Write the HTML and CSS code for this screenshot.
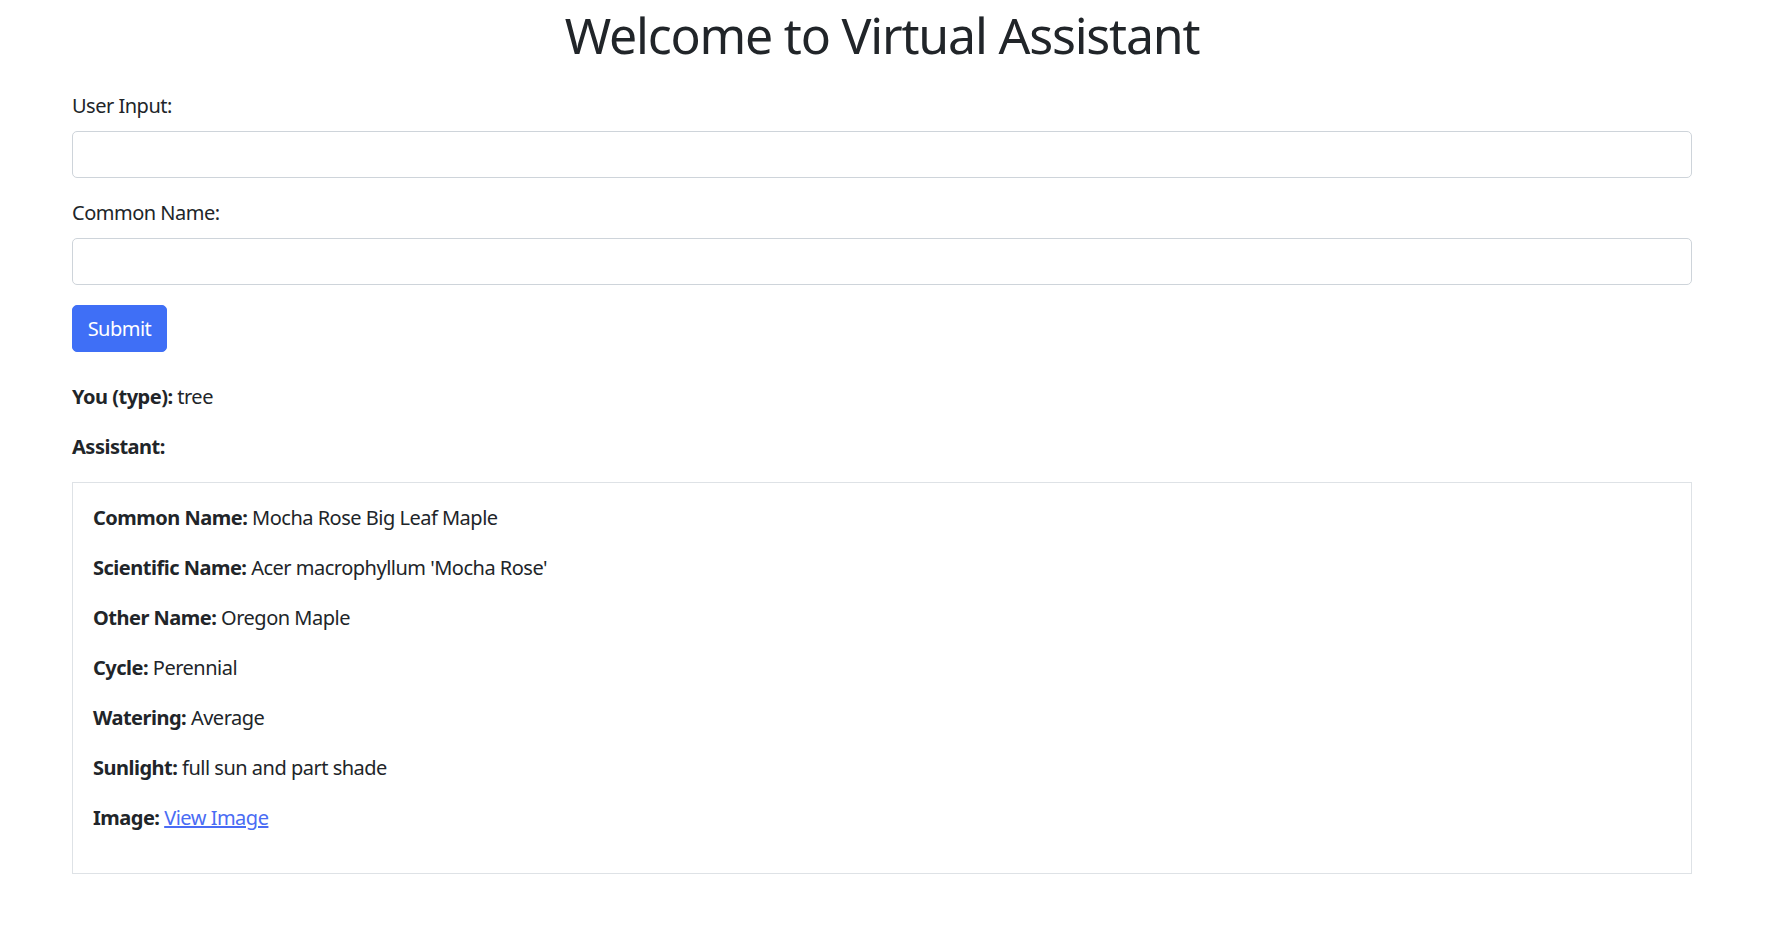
FILE: index.html
```html
<!DOCTYPE html>
<html lang="en">
<head>
<meta charset="utf-8">
<title>Virtual Assistant</title>
<link rel="stylesheet" href="styles.css">
</head>
<body>
<div class="container">
  <h1 class="title">Welcome to Virtual Assistant</h1>
  <form class="form">
    <div class="field">
      <label class="label" for="userInput">User Input:</label>
      <input class="control" id="userInput" type="text">
    </div>
    <div class="field">
      <label class="label" for="commonName">Common Name:</label>
      <input class="control" id="commonName" type="text">
    </div>
    <button class="btn" type="button">Submit</button>
  </form>
  <div class="chat">
    <p class="line"><strong>You (type):</strong> tree</p>
    <p class="line"><strong>Assistant:</strong></p>
    <div class="result">
      <p class="line"><strong>Common Name:</strong> Mocha Rose Big Leaf Maple</p>
      <p class="line"><strong>Scientific Name:</strong> Acer macrophyllum 'Mocha Rose'</p>
      <p class="line"><strong>Other Name:</strong> Oregon Maple</p>
      <p class="line"><strong>Cycle:</strong> Perennial</p>
      <p class="line"><strong>Watering:</strong> Average</p>
      <p class="line"><strong>Sunlight:</strong> full sun and part shade</p>
      <p class="line"><strong>Image:</strong> <a class="link" href="#">View Image</a></p>
    </div>
  </div>
</div>
</body>
</html>
```

FILE: styles.css
```css
* { box-sizing: border-box; }
html, body { margin: 0; padding: 0; background: #fff; }
body {
  font-family: "Noto Sans", "Open Sans", sans-serif;
  font-size: 20px;
  line-height: 1.5;
  letter-spacing: -0.5px;
  color: #212529;
}
.container {
  width: 1620px;
  margin-left: 72px;
}
.title {
  margin: 0 0 21px;
  font-size: 50px;
  font-weight: 400;
  line-height: 70px;
  letter-spacing: -1.2px;
  text-align: center;
}
.field { margin-bottom: 20px; }
.label {
  display: block;
  margin-bottom: 10px;
  line-height: 30px;
}
.control {
  display: block;
  width: 100%;
  height: 47px;
  border: 1px solid #ced4da;
  border-radius: 5px;
  font: inherit;
  padding: 0 15px;
}
.btn {
  display: block;
  width: 95px;
  height: 47px;
  padding: 0;
  border: 1px solid #3f6ff6;
  border-radius: 5px;
  background: #3f6ff6;
  color: #fff;
  font: inherit;
  letter-spacing: -0.5px;
}
.chat { margin-top: 30px; }
.line { margin: 0 0 20px; }
.line strong { font-weight: 700; }
.result {
  border: 1px solid #dee2e6;
  padding: 20px;
  min-height: 392px;
}
.link { color: #4a6cf4; text-decoration: underline; }
```
